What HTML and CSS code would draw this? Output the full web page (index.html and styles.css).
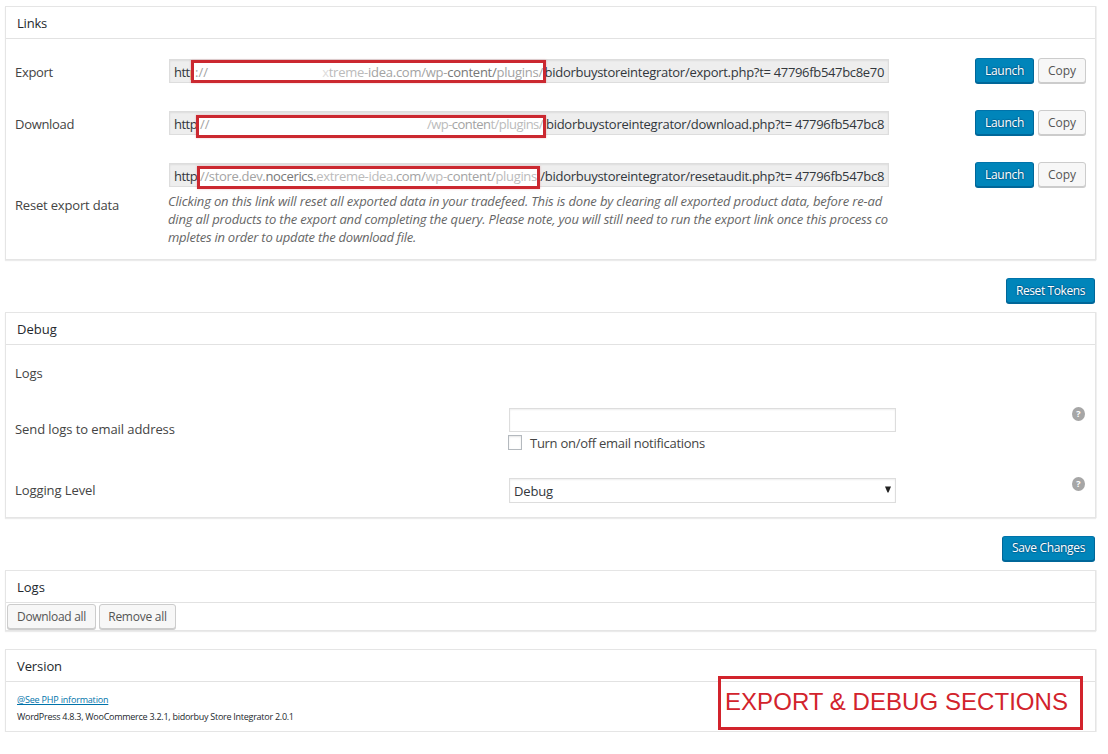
FILE: index.html
```html
<!DOCTYPE html>
<html lang="en">
<head>
<meta charset="utf-8">
<title>Store Integrator – Export &amp; Debug</title>
<link rel="stylesheet" href="styles.css">
</head>
<body>
<main class="page">
  <section class="panel links">
    <h3 class="panel-title t-tight">Links</h3>
    <div class="link-row">
      <span class="label">Export</span>
      <div class="field">
        <span class="scheme">http</span><span class="tail">bidorbuystoreintegrator/export.php?t=<b>47796fb547bc8e70</b></span>
        <div class="mask mask-export"><span class="start"><i class="f2">://</i></span><span class="end"><i class="f0">x</i><i class="f1">treme-</i><i class="f2">idea.com/wp-</i><i class="f3">content/</i><i class="f2">plugins/</i></span></div>
      </div>
      <div class="actions"><button class="btn primary launch">Launch</button><button class="btn copy">Copy</button></div>
    </div>
    <div class="link-row">
      <span class="label">Download</span>
      <div class="field">
        <span class="scheme">http</span><span class="tail">bidorbuystoreintegrator/download.php?t=<b>47796fb547bc8</b></span>
        <div class="mask mask-download"><span class="start"><i class="f2">//</i></span><span class="end"><i class="f1">/wp-</i><i class="f2">conten</i><i class="f1">t/plugins/</i></span></div>
      </div>
      <div class="actions"><button class="btn primary launch">Launch</button><button class="btn copy">Copy</button></div>
    </div>
    <div class="link-row">
      <span class="label label-reset">Reset export data</span>
      <div class="field-col">
        <div class="field">
          <span class="scheme">http</span><span class="tail">/bidorbuystoreintegrator/resetaudit.php?t=<b>47796fb547bc8</b></span>
          <div class="mask mask-reset"><span class="whole"><i class="f2">//store.dev.</i><i class="f3">nocerics.</i><i class="f1">extreme-idea</i><i class="f2">.com/</i><i class="f1">wp-</i><i class="f2">content/</i><i class="f1">plugins</i></span></div>
        </div>
        <p class="note"><span class="n1">Clicking on this link will reset all exported data in your tradefeed. This is done by clearing all exported product data, before re-ad</span><br><span class="n2">ding all products to the export and completing the query. Please note, you will still need to run the export link once this process co</span><br><span class="n3">mpletes in order to update the download file.</span></p>
      </div>
      <div class="actions"><button class="btn primary launch">Launch</button><button class="btn copy">Copy</button></div>
    </div>
  </section>

  <div class="submit submit-tokens"><button class="btn primary tokens">Reset Tokens</button></div>

  <section class="panel debug">
    <h3 class="panel-title">Debug</h3>
    <div class="debug-row row-logs"><span class="label">Logs</span></div>
    <div class="debug-row row-email">
      <span class="label">Send logs to email address</span>
      <div class="control">
        <input class="text" type="text">
        <label class="check"><span class="box"></span><span>Turn on/off email notifications</span></label>
      </div>
      <span class="help">?</span>
    </div>
    <div class="debug-row row-level">
      <span class="label">Logging Level</span>
      <div class="control"><div class="select"><span>Debug</span><svg width="6" height="7" viewBox="0 0 6 7"><path d="M0 .5h6L3.5 6.5h-1z" fill="#222"/></svg></div></div>
      <span class="help">?</span>
    </div>
  </section>

  <div class="submit submit-save"><button class="btn primary save">Save Changes</button></div>

  <section class="panel logs">
    <h3 class="panel-title">Logs</h3>
    <div class="log-actions"><button class="btn dl">Download all</button><button class="btn rm">Remove all</button></div>
  </section>

  <section class="panel version">
    <h3 class="panel-title t-version">Version</h3>
    <div class="version-body"><a class="php">@See PHP information</a><span class="versions">WordPress 4.8.3, WooCommerce 3.2.1, bidorbuy Store Integrator 2.0.1</span></div>
    <div class="caption">EXPORT &amp; DEBUG SECTIONS</div>
  </section>
</main>
</body>
</html>
```
FILE: styles.css
```css
* { box-sizing: border-box; }
body { margin: 0; background: #fff; color: #444; font: 13px/18px "Open Sans", "Noto Sans", sans-serif; }
.page { width: 1091px; margin-left: 5px; padding-top: 6px; }

.panel { position: relative; width: 1091px; border: 1px solid #e5e5e5; box-shadow: 0 1px 1px rgba(0,0,0,.08), 1px 0 0 #f3f3f3; background: #fff; }
.panel-title { margin: 0; height: 32px; padding: 0 11px; border-bottom: 1px solid #e2e2e2; font-size: 13px; line-height: 33px; font-weight: 400; color: #23282d; }
.t-tight { letter-spacing: -.2px; }
.t-version { letter-spacing: -.09px; }

.links { height: 254px; }
.link-row { display: grid; grid-template-columns: 154px 720px 1fr; height: 52px; padding: 20px 0 0 9px; }
.label { letter-spacing: -.08px; }
.link-row .label { line-height: 26px; letter-spacing: -.3px; }
.link-row .label-reset { padding-top: 29px; letter-spacing: -.18px; white-space: nowrap; }
.field { position: relative; display: flex; justify-content: space-between; height: 24px; padding: 0 4px; background: #eee; border: 1px solid #ddd; box-shadow: inset 0 1px 2px rgba(0,0,0,.07); line-height: 25px; color: #32373c; white-space: nowrap; }
.scheme { letter-spacing: -.5px; }
.tail { letter-spacing: -.27px; }
.tail b { font-weight: 400; margin-left: 3px; letter-spacing: -.33px; }

/* Redaction frames laid over part of each URL */
.mask { position: absolute; display: flex; justify-content: space-between; overflow: hidden; height: 23px; border: 3px solid #cb2830; background: #fff; box-shadow: 0 0 2px rgba(203,40,48,.3); }
.mask i { font-style: normal; }
.f0 { color: #ddd; }
.f1 { color: #bbb; }
.f2 { color: #a3a3a3; }
.f3 { color: #777; }
.mask-export { left: 21px; top: 0; width: 355px; padding-left: 1px; line-height: 19px; }
.end { letter-spacing: -.25px; }
.mask-download { left: 26px; top: 3px; width: 350px; padding-left: 1px; line-height: 13px; }
.mask-download .end { letter-spacing: -.54px; }
.mask-reset { left: 27px; top: 2px; width: 343px; line-height: 15px; }
.whole { letter-spacing: -.33px; }

.note { margin: 5px 0 0 -1px; font-style: italic; color: #666; white-space: nowrap; }
.n1 { letter-spacing: -.155px; }
.n2 { letter-spacing: -.168px; }
.n3 { letter-spacing: -.241px; }

.actions { display: flex; gap: 4px; justify-content: flex-end; padding-right: 9px; margin-top: -1px; }
.btn { flex: none; height: 25px; padding: 0; border: 1px solid #ccc; border-radius: 3px; background: #f7f7f7; box-shadow: 0 1px 0 #ccc; color: #555; font: 12px/23px "Open Sans", "Noto Sans", sans-serif; text-align: center; }
.primary { background: #0085ba; border-color: #0073aa #006799 #006799; box-shadow: 0 1px 0 #006799; color: #fff; text-shadow: 0 -1px 1px #006799, 1px 0 1px #006799, 0 1px 1px #006799, -1px 0 1px #006799; }
.launch { width: 59px; letter-spacing: -.29px; }
.copy { width: 48px; }
.tokens { width: 89px; letter-spacing: -.41px; }
.save { width: 93px; letter-spacing: -.33px; }
.dl { width: 89px; letter-spacing: -.31px; }
.rm { width: 77px; letter-spacing: -.25px; }

.submit { display: flex; justify-content: flex-end; padding-right: 1px; }
.submit-tokens { height: 52px; padding-top: 18px; }
.submit-save { height: 52px; padding-top: 18px; }
.submit-save .btn { line-height: 22px; padding-bottom: 1px; }

.debug { height: 206px; }
.debug-row { display: grid; grid-template-columns: 494px 387px 1fr; padding-left: 9px; }
.row-logs { height: 57px; padding-top: 19px; }
.row-email { height: 67px; padding-top: 6px; }
.row-email .label { padding-top: 12px; }
.row-email .help { margin-top: -1px; }
.row-level { padding-top: 9px; }
.row-level .label { padding-top: 3px; }
.row-level .help { margin-top: -1px; }
.text { display: block; width: 387px; height: 24px; margin: 0; border: 1px solid #ddd; background: #fff; box-shadow: inset 0 1px 2px rgba(0,0,0,.07); }
.check { display: flex; align-items: center; gap: 8px; margin: 2px 0 0 -1px; letter-spacing: -.275px; }
.box { width: 14px; height: 15px; margin-top: -1px; border: 1px solid #b4b9be; background: #fff; box-shadow: inset 0 1px 2px rgba(0,0,0,.1); }
.select { display: flex; justify-content: space-between; align-items: center; height: 25px; padding: 1px 4px 0; border: 1px solid #ddd; color: #32373c; letter-spacing: -.14px; box-shadow: inset 0 1px 2px rgba(0,0,0,.07); }
.select svg { margin-top: -4px; }
.help { justify-self: end; width: 13px; height: 14px; margin-right: 10px; border-radius: 50%; background: #a6a6a6; color: #fff; font-size: 9px; font-weight: 700; line-height: 14px; text-align: center; }

.logs { height: 61px; }
.log-actions { display: flex; gap: 3px; padding: 1px 0 0 1px; }
.version { height: 83px; margin-top: 18px; }
.version-body { display: flex; flex-direction: column; padding: 9px 11px; font-size: 9px; line-height: 17px; color: #23282d; }
.php { align-self: flex-start; color: #0073aa; text-decoration: underline; letter-spacing: -.18px; }
.versions { letter-spacing: -.265px; }
.caption { position: absolute; left: 712px; top: 26px; width: 365px; height: 54px; padding-left: 4px; border: 3px solid #d2232c; color: #d2232c; font: 24px/45px "Liberation Sans", Arial, sans-serif; letter-spacing: .05px; white-space: nowrap; }
```
